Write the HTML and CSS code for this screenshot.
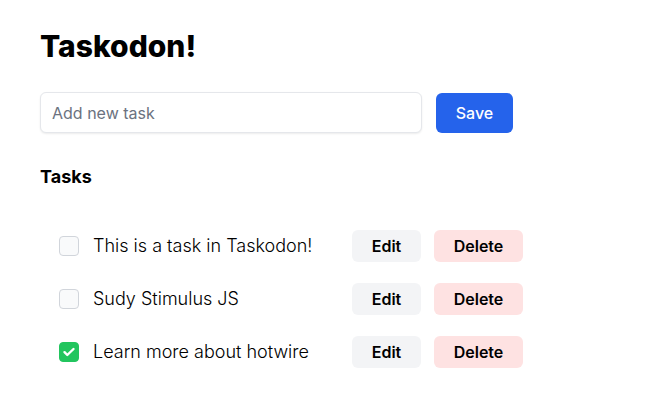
FILE: index.html
```html
<!DOCTYPE html>
<html lang="en">
<head>
<meta charset="utf-8">
<title>Taskodon!</title>
<link rel="stylesheet" href="styles.css">
</head>
<body>
<main class="app">
  <h1 class="title">Taskodon!</h1>
  <form class="new-task">
    <input class="task-input" type="text" placeholder="Add new task">
    <button class="btn btn-save" type="button">Save</button>
  </form>
  <h2 class="section-title">Tasks</h2>
  <ul class="task-list">
    <li class="task">
      <span class="check"></span>
      <span class="task-label">This is a task in Taskodon!</span>
      <button class="btn btn-edit" type="button">Edit</button>
      <button class="btn btn-delete" type="button">Delete</button>
    </li>
    <li class="task">
      <span class="check"></span>
      <span class="task-label">Sudy Stimulus JS</span>
      <button class="btn btn-edit" type="button">Edit</button>
      <button class="btn btn-delete" type="button">Delete</button>
    </li>
    <li class="task">
      <span class="check check-on"><svg viewBox="0 0 20 20" width="20" height="20"><path d="M5.5 10.2l2.8 2.8L14.5 7" fill="none" stroke="#fff" stroke-width="2.4" stroke-linecap="round" stroke-linejoin="round"/></svg></span>
      <span class="task-label">Learn more about hotwire</span>
      <button class="btn btn-edit" type="button">Edit</button>
      <button class="btn btn-delete" type="button">Delete</button>
    </li>
  </ul>
</main>
</body>
</html>
```

FILE: styles.css
```css
* { box-sizing: border-box; }
html, body { margin: 0; background: #fff; }
body {
  font-family: Inter, "Noto Sans", sans-serif;
  color: #000;
}
.app {
  padding: 28px 40px 0 40px;
}
.title {
  margin: 0;
  font-size: 30px;
  line-height: 36px;
  font-weight: 800;
  color: #000;
}
.new-task {
  margin-top: 28px;
  display: flex;
  align-items: center;
  gap: 14px;
}
.task-input {
  width: 382px;
  height: 41px;
  border: 1px solid #e5e7eb;
  border-radius: 6px;
  box-shadow: 0 1px 2px rgba(0,0,0,0.08);
  padding: 0 11px;
  font-family: inherit;
  font-size: 16px;
  color: #111827;
  outline: none;
}
.task-input::placeholder { color: #6b7280; }
.btn {
  font-family: inherit;
  font-size: 16px;
  border: 0;
  border-radius: 6px;
  cursor: pointer;
}
.btn-save {
  width: 77px;
  height: 40px;
  background: #2563eb;
  color: #fff;
  font-weight: 500;
}
.section-title {
  margin: 30px 0 0 0;
  font-size: 18px;
  line-height: 28px;
  font-weight: 700;
  color: #000;
}
.task-list {
  list-style: none;
  margin: 39px 0 0 0;
  padding: 0 0 0 19px;
  display: flex;
  flex-direction: column;
  gap: 21px;
}
.task {
  display: flex;
  align-items: center;
  height: 32px;
}
.check {
  width: 20px;
  height: 20px;
  border: 1px solid #d1d5db;
  border-radius: 4px;
  background: #f9fafb;
  flex: none;
  display: flex;
}
.check-on {
  background: #22c55e;
  border-color: #22c55e;
}
.check-on svg { margin: -1px; }
.task-label {
  margin-left: 14px;
  width: 259px;
  font-size: 18px;
  line-height: 28px;
  font-weight: 300;
  color: #000;
}
.btn-edit,
.btn-delete {
  height: 32px;
  font-weight: 600;
  color: #000;
}
.btn-edit {
  width: 69px;
  background: #f3f4f6;
}
.btn-delete {
  width: 89px;
  margin-left: 13px;
  background: #fee2e2;
}
```
